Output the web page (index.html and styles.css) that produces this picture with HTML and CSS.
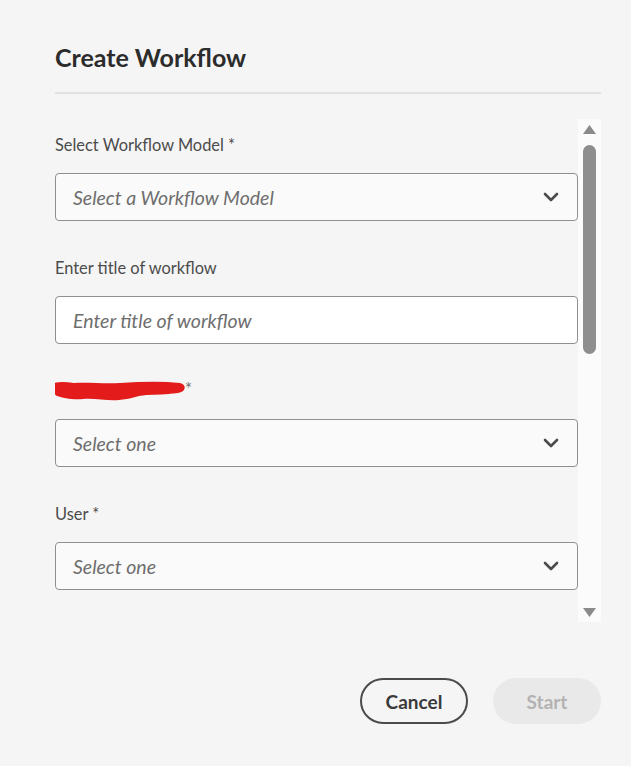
FILE: index.html
```html
<!DOCTYPE html>
<html lang="en">
<head>
  <meta charset="UTF-8" />
  <meta name="viewport" content="width=device-width, initial-scale=1.0" />
  <title>Create Workflow</title>
  <link rel="stylesheet" href="styles.css">
</head>
<body>
  <div class="dialog">
    <h1 class="title">Create Workflow</h1>
    <div class="divider"></div>

    <div class="content">
      <div class="fields">
        <div class="field">
          <label class="label">Select Workflow Model *</label>
          <div class="select">
            <span class="placeholder">Select a Workflow Model</span>
            <svg class="chevron" width="16" height="10" viewBox="0 0 16 10"><path d="M2 2l6 6 6-6" fill="none" stroke="#4b4b4b" stroke-width="2.6" stroke-linecap="round" stroke-linejoin="round"/></svg>
          </div>
        </div>

        <div class="field">
          <label class="label">Enter title of workflow</label>
          <div class="input">
            <span class="placeholder">Enter title of workflow</span>
          </div>
        </div>

        <div class="field">
          <label class="label redacted">
            <svg class="scribble" width="138" height="24" viewBox="0 0 138 24"><path d="M2 5c6-3 14-2 22-1 14-1 30 1 46 0 20-1 40-2 60 0 5 1 6 5 3 8-4 3-10 2-14 3-10 1-20 0-30 2-6 2-12 3-20 4-12 1-24-2-36-1-10 1-20-1-26-3-5-3-6-9-5-12z" fill="#e31b1b"/></svg>
            <span>*</span>
          </label>
          <div class="select">
            <span class="placeholder">Select one</span>
            <svg class="chevron" width="16" height="10" viewBox="0 0 16 10"><path d="M2 2l6 6 6-6" fill="none" stroke="#4b4b4b" stroke-width="2.6" stroke-linecap="round" stroke-linejoin="round"/></svg>
          </div>
        </div>

        <div class="field">
          <label class="label">User *</label>
          <div class="select">
            <span class="placeholder">Select one</span>
            <svg class="chevron" width="16" height="10" viewBox="0 0 16 10"><path d="M2 2l6 6 6-6" fill="none" stroke="#4b4b4b" stroke-width="2.6" stroke-linecap="round" stroke-linejoin="round"/></svg>
          </div>
        </div>
      </div>

      <div class="scrollbar">
        <svg class="arrow" width="15" height="11" viewBox="0 0 15 11"><path d="M7.5 1l6.5 9h-13z" fill="#8a8a8a"/></svg>
        <div class="thumb"></div>
        <div class="track-space"></div>
        <svg class="arrow" width="15" height="11" viewBox="0 0 15 11"><path d="M1 1h13l-6.5 9z" fill="#8a8a8a"/></svg>
      </div>
    </div>

    <div class="footer">
      <button class="btn btn-cancel">Cancel</button>
      <button class="btn btn-start" disabled>Start</button>
    </div>
  </div>
</body>
</html>
```

FILE: styles.css
```css
body {
  margin: 0;
  font-family: Lato, "Open Sans", sans-serif;
  background: #f5f5f5;
  color: #2c2c2c;
}
.dialog {
  width: 546px;
  padding: 42px 30px 0 55px;
}
.title {
  margin: 0;
  font-size: 25px;
  line-height: 30px;
  font-weight: bold;
  color: #2c2c2c;
}
.divider {
  height: 2px;
  background: #e1e1e1;
  margin-top: 20px;
}
.content {
  display: flex;
  height: 503px;
  margin-top: 25px;
  overflow: hidden;
}
.fields {
  width: 523px;
  padding-top: 14px;
  display: flex;
  flex-direction: column;
  gap: 35px;
}
.field {
  display: flex;
  flex-direction: column;
  gap: 16px;
}
.label {
  font-size: 16.4px;
  line-height: 24px;
  height: 24px;
  color: #4b4b4b;
  display: flex;
  align-items: center;
}
.redacted {
  margin-left: -5px;
}
.scribble {
  display: block;
  flex: none;
}
.redacted span {
  margin-left: -3px;
  margin-top: -4px;
  color: #6e6e6e;
}
.select,
.input {
  box-sizing: border-box;
  height: 48px;
  border: 1px solid #8f8f8f;
  border-radius: 4px;
  background: #fafafa;
  display: flex;
  align-items: center;
  padding: 0 18px 0 17px;
}
.input {
  background: #ffffff;
}
.placeholder {
  flex: 1;
  font-size: 19.5px;
  font-style: italic;
  color: #6e6e6e;
}
.chevron {
  display: block;
}
.scrollbar {
  width: 23px;
  background: #fbfbfb;
  display: flex;
  flex-direction: column;
  align-items: center;
  padding: 5px 0 4px;
  box-sizing: border-box;
}
.arrow {
  display: block;
}
.thumb {
  width: 13px;
  height: 209px;
  margin-top: 10px;
  border-radius: 7px;
  background: #8e8e8e;
}
.track-space {
  flex: 1;
}
.footer {
  display: flex;
  justify-content: flex-end;
  gap: 25px;
  margin-top: 56px;
}
.btn {
  box-sizing: border-box;
  width: 108px;
  height: 46px;
  border-radius: 23px;
  font-family: Lato, "Open Sans", sans-serif;
  font-size: 19px;
  font-weight: bold;
  cursor: pointer;
}
.btn-cancel {
  background: transparent;
  border: 2px solid #4b4b4b;
  color: #3a3a3a;
}
.btn-start {
  background: #e9e9e9;
  border: none;
  color: #b3b3b3;
}
```
